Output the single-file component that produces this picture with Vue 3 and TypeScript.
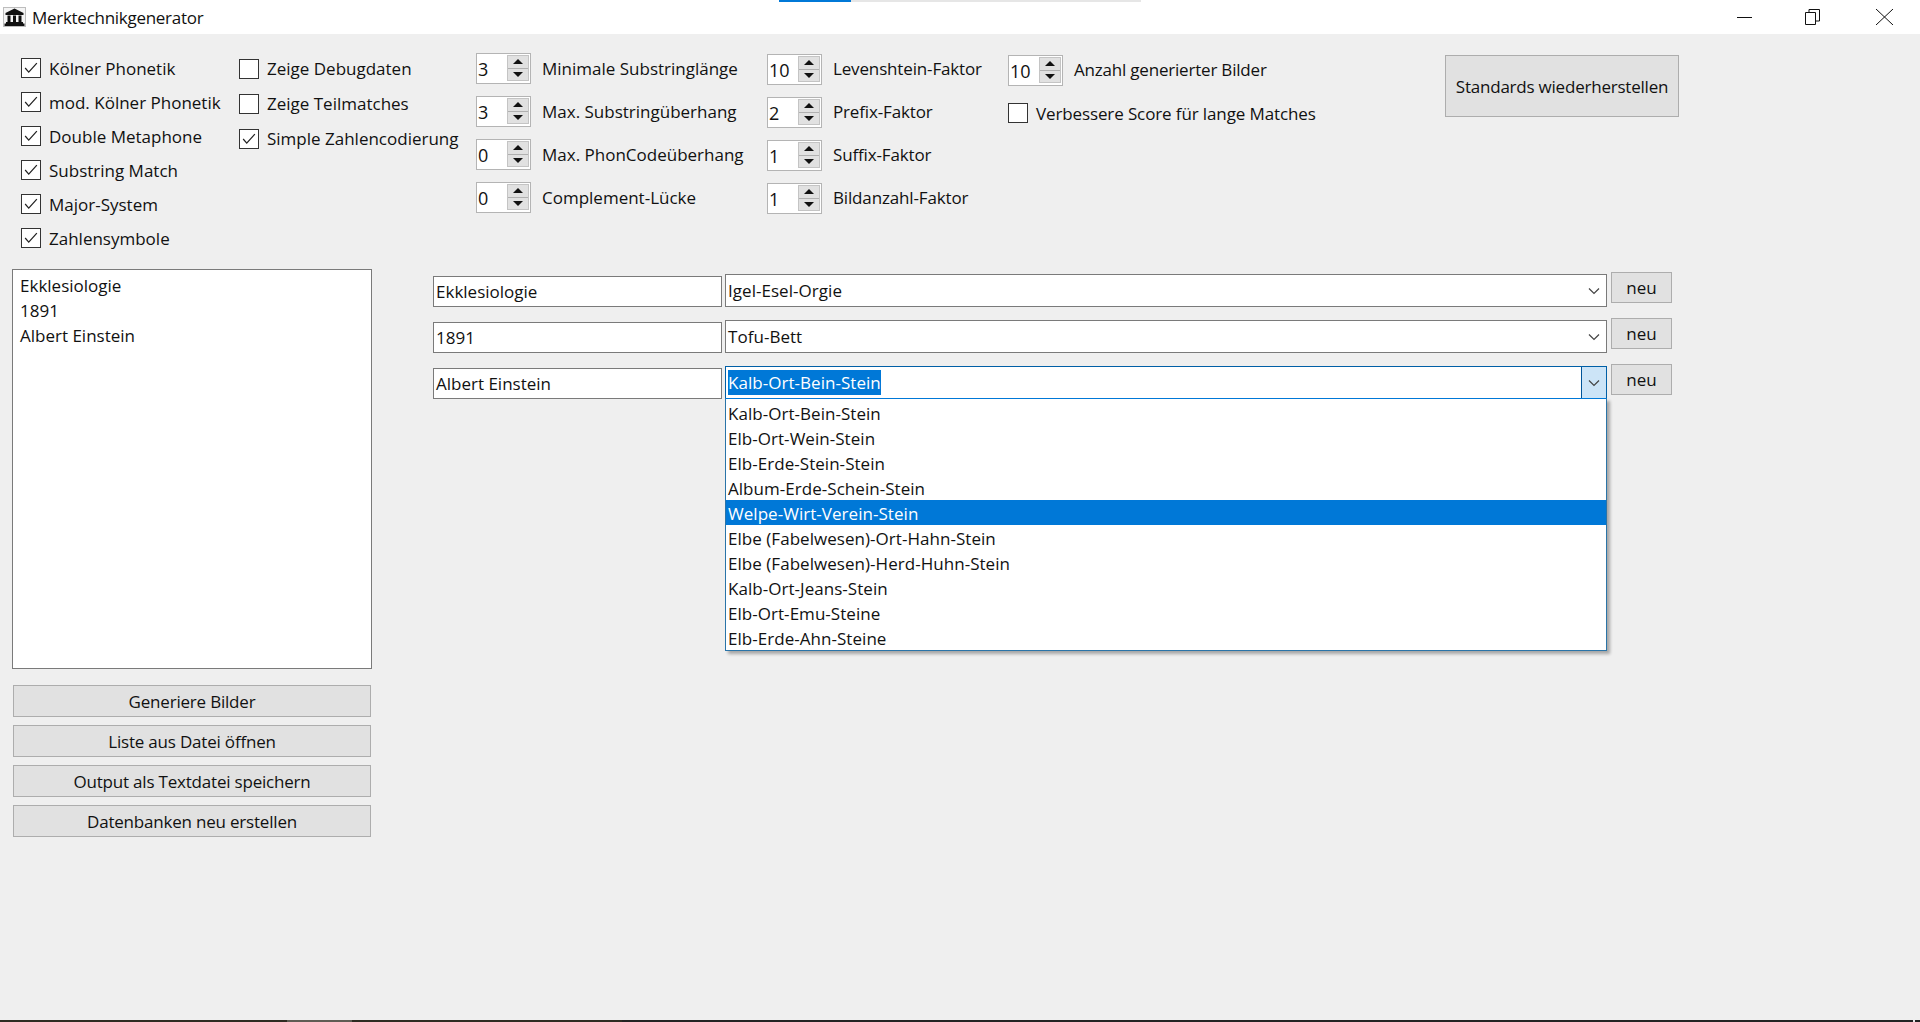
<script setup lang="ts">
const col1 = ['Kölner Phonetik', 'mod. Kölner Phonetik', 'Double Metaphone', 'Substring Match', 'Major-System', 'Zahlensymbole']
const col2 = [
  { label: 'Zeige Debugdaten', on: false },
  { label: 'Zeige Teilmatches', on: false },
  { label: 'Simple Zahlencodierung', on: true },
]
const spin1 = [
  { v: '3', l: 'Minimale Substringlänge' },
  { v: '3', l: 'Max. Substringüberhang' },
  { v: '0', l: 'Max. PhonCodeüberhang' },
  { v: '0', l: 'Complement-Lücke' },
]
const spin2 = [
  { v: '10', l: 'Levenshtein-Faktor' },
  { v: '2', l: 'Prefix-Faktor' },
  { v: '1', l: 'Suffix-Faktor' },
  { v: '1', l: 'Bildanzahl-Faktor' },
]
const words = ['Ekklesiologie', '1891', 'Albert Einstein']
const actions = ['Generiere Bilder', 'Liste aus Datei öffnen', 'Output als Textdatei speichern', 'Datenbanken neu erstellen']
const rows = [
  { word: 'Ekklesiologie', pick: 'Igel-Esel-Orgie', open: false },
  { word: '1891', pick: 'Tofu-Bett', open: false },
  { word: 'Albert Einstein', pick: 'Kalb-Ort-Bein-Stein', open: true },
]
const options = [
  'Kalb-Ort-Bein-Stein', 'Elb-Ort-Wein-Stein', 'Elb-Erde-Stein-Stein', 'Album-Erde-Schein-Stein',
  'Welpe-Wirt-Verein-Stein', 'Elbe (Fabelwesen)-Ort-Hahn-Stein', 'Elbe (Fabelwesen)-Herd-Huhn-Stein',
  'Kalb-Ort-Jeans-Stein', 'Elb-Ort-Emu-Steine', 'Elb-Erde-Ahn-Steine',
]
</script>

<template>
  <div class="window">
    <div class="progress"><span class="progress-fill"></span></div>
    <header class="titlebar">
      <svg class="app-icon" viewBox="0 0 23 20" width="23" height="20">
        <rect x="0" y="0" width="23" height="20" fill="#bdbdbd" />
        <rect x="1" y="1" width="21" height="18" fill="#f4f4f4" />
        <path d="M11.500 1.500 20.500 6V8H2.500V6Z" fill="#111" />
        <path d="M4.500 8.500h3V15h-3zM10 8.500h3V15h-3zM15.500 8.500h3V15h-3z" fill="#111" />
        <path d="M3 15h17v1.500H3zM1.500 16.500h20V19h-20z" fill="#111" />
      </svg>
      <span class="title">Merktechnikgenerator</span>
      <div class="win-controls">
        <svg class="wc min" viewBox="0 0 15 16" width="15" height="16"><path d="M0 8.500h15" stroke="#111" fill="none" /></svg>
        <svg class="wc restore-icon" viewBox="0 0 15 16" width="15" height="16"><path d="M.5 3.500h10v12H.5zM4 3.500V.5h10.500v11.500H10.500" stroke="#111" fill="none" /></svg>
        <svg class="wc close" viewBox="0 0 17 16" width="17" height="16"><path d="M0 0l17 16M17 0 0 16" stroke="#111" fill="none" /></svg>
      </div>
    </header>

    <main class="content">
      <section class="options">
        <div class="check-col col-a">
          <label v-for="c in col1" :key="c" class="check">
            <span class="box">
              <svg viewBox="0 0 20 20" width="18" height="18"><path d="M3.500 10l4 4.500 9-10" stroke="#222" stroke-width="1.400" fill="none" /></svg>
            </span>
            {{ c }}
          </label>
        </div>
        <div class="check-col col-b">
          <label v-for="c in col2" :key="c.label" class="check">
            <span class="box">
              <svg v-if="c.on" viewBox="0 0 20 20" width="18" height="18"><path d="M3.500 10l4 4.500 9-10" stroke="#222" stroke-width="1.400" fill="none" /></svg>
            </span>
            {{ c.label }}
          </label>
        </div>
        <div class="spin-col col-c">
          <div v-for="s in spin1" :key="s.l" class="spin-row">
            <div class="spin">
              <span class="spin-val">{{ s.v }}</span>
              <span class="spin-btns"><i class="up"></i><i class="down"></i></span>
            </div>
            <span class="spin-label">{{ s.l }}</span>
          </div>
        </div>
        <div class="spin-col col-d">
          <div v-for="s in spin2" :key="s.l" class="spin-row">
            <div class="spin">
              <span class="spin-val">{{ s.v }}</span>
              <span class="spin-btns"><i class="up"></i><i class="down"></i></span>
            </div>
            <span class="spin-label">{{ s.l }}</span>
          </div>
        </div>
        <div class="col-e">
          <div class="spin-row">
            <div class="spin">
              <span class="spin-val">10</span>
              <span class="spin-btns"><i class="up"></i><i class="down"></i></span>
            </div>
            <span class="spin-label">Anzahl generierter Bilder</span>
          </div>
          <label class="check wide">
            <span class="box"></span>
            Verbessere Score für lange Matches
          </label>
        </div>
        <button class="btn restore">Standards wiederherstellen</button>
      </section>

      <section class="lower">
        <aside class="left">
          <div class="listbox">
            <div v-for="w in words" :key="w" class="list-line">{{ w }}</div>
          </div>
          <div class="actions">
            <button v-for="a in actions" :key="a" class="btn action">{{ a }}</button>
          </div>
        </aside>

        <div class="mappings">
          <div v-for="r in rows" :key="r.word" class="map-row">
            <div class="word">{{ r.word }}</div>
            <div class="combo" :class="{ open: r.open }">
              <span class="combo-text" :class="{ sel: r.open }">{{ r.pick }}</span>
              <span class="combo-arrow">
                <svg viewBox="0 0 12 8" width="12" height="8"><path d="M1 1.500l5 5 5-5" stroke="#444" stroke-width="1.200" fill="none" /></svg>
              </span>
              <ul v-if="r.open" class="dropdown">
                <li v-for="(o, i) in options" :key="o" :class="{ hot: i === 4 }">{{ o }}</li>
              </ul>
            </div>
            <button class="btn neu">neu</button>
          </div>
        </div>
      </section>
    </main>
    <div class="taskbar-edge">
      <span class="edge-warm"></span>
      <span class="edge-active"></span>
      <span class="edge-warm short"></span>
      <span class="edge-dark"></span>
      <span class="edge-tick"></span>
      <span class="edge-end"></span>
    </div>
  </div>
</template>

<style>
html, body { margin: 0; background: #efefef; }
</style>

<style scoped>
.window {
  position: relative;
  width: 1920px;
  height: 1022px;
  display: flex;
  flex-direction: column;
  overflow: hidden;
  background: #efefef;
  color: #111;
  font-family: "Open Sans", "Noto Sans", sans-serif;
  font-size: 17px;
}
.progress {
  position: absolute;
  left: 779px;
  top: 0;
  width: 362px;
  height: 2px;
  background: #e6e6e6;
}
.progress-fill { display: block; width: 72px; height: 2px; background: #0078d7; }
.titlebar {
  height: 34px;
  flex: none;
  background: #fff;
  display: flex;
  align-items: center;
  padding-left: 3px;
  box-sizing: border-box;
}
.app-icon { flex: none; margin-top: -1px; }
.title { margin-left: 6px; font-size: 17px; line-height: 34px; letter-spacing: -0.28px; margin-top: 1px; }
.win-controls { margin-left: auto; display: flex; padding-right: 27px; align-items: center; }
.wc { display: block; }
.restore-icon { margin-left: 53px; margin-top: -1px; }
.close { margin-left: 56px; margin-top: -1px; }
.content { flex: 1; min-height: 0; display: flex; flex-direction: column; }
.options { display: flex; align-items: flex-start; padding-top: 17px; height: 218px; box-sizing: border-box; }
.check-col { display: flex; flex-direction: column; }
.col-a { margin-left: 21px; width: 218px; }
.col-b { width: 237px; }
.check { display: flex; align-items: center; gap: 8px; height: 34px; white-space: nowrap; }
.col-b .check { height: 35px; }
.box {
  width: 20px;
  height: 20px;
  box-sizing: border-box;
  border: 1px solid #333;
  background: #fff;
  display: flex;
  align-items: center;
  justify-content: center;
  flex: none;
}
.spin-col { display: flex; flex-direction: column; gap: 13px; padding-top: 2px; }
.col-c { width: 291px; }
.col-d { width: 241px; padding-top: 3px; letter-spacing: -0.15px; }
.col-d .spin-label { margin-top: -2px; }
.spin-row { display: flex; align-items: center; gap: 11px; height: 30px; white-space: nowrap; }
.spin {
  width: 55px;
  height: 31px;
  box-sizing: border-box;
  border: 1px solid #b4b4b4;
  background: #fff;
  display: flex;
  align-items: center;
  padding: 0 1px;
  flex: none;
  letter-spacing: 0;
}
.spin-val { flex: 1; padding-left: 0; font-size: 18px; line-height: 29px; margin-top: 2px; }
.spin-btns { width: 22px; height: 26px; display: flex; flex-direction: column; flex: none; background: #e1e1e1; border: 1px solid #c4c4c4; box-sizing: border-box; }
.spin-btns i { flex: 1; display: flex; align-items: center; justify-content: center; }
.spin-btns .up { border-bottom: 1px solid #b0b0b0; }
.spin-btns i::before { content: ""; width: 0; height: 0; border-left: 5px solid transparent; border-right: 5px solid transparent; }
.spin-btns .up::before { border-bottom: 5px solid #111; }
.spin-btns .down::before { border-top: 5px solid #111; }
.col-e { padding-top: 4px; display: flex; flex-direction: column; gap: 11px; }
.col-e .spin-label { letter-spacing: -0.2px; margin-top: -2px; }
.check.wide { height: 34px; letter-spacing: -0.12px; }
.restore { width: 234px; height: 62px; margin-left: auto; margin-right: 241px; margin-top: 4px; }
.btn {
  display: block;
  box-sizing: border-box;
  background: #e1e1e1;
  border: 1px solid #adadad;
  color: #111;
  font: inherit;
  padding: 0;
}
.restore.btn { letter-spacing: -0.22px; }
.lower { display: flex; align-items: flex-start; padding-top: 17px; }
.left { margin-left: 12px; width: 360px; flex: none; }
.listbox {
  height: 400px;
  box-sizing: border-box;
  border: 1px solid #7a7a7a;
  background: #fff;
  padding: 3px 7px;
}
.list-line { height: 25px; line-height: 25px; }
.actions { margin-top: 16px; margin-left: 1px; display: flex; flex-direction: column; gap: 8px; }
.action.btn { width: 358px; height: 32px; letter-spacing: -0.2px; }
.mappings { margin-left: 61px; display: flex; flex-direction: column; gap: 13px; padding-top: 5px; }
.map-row { display: flex; align-items: flex-end; height: 33px; position: relative; }
.word {
  width: 289px;
  height: 31px;
  line-height: 30px;
  box-sizing: border-box;
  border: 1px solid #7a7a7a;
  background: #fff;
  padding: 0 2px;
  flex: none;
}
.combo {
  position: relative;
  margin-left: 3px;
  width: 882px;
  height: 33px;
  box-sizing: border-box;
  border: 1px solid #7a7a7a;
  background: #fff;
  display: flex;
  align-items: center;
  padding-left: 2px;
  flex: none;
  letter-spacing: 0.04px;
}
.combo-text { line-height: 25px; margin-top: -1px; }
.combo-text.sel { background: #0078d7; color: #fff; }
.combo-arrow { margin-left: auto; width: 25px; height: 31px; display: flex; align-items: center; justify-content: center; box-sizing: border-box; }
.combo.open { border-color: #005fa6; }
.combo.open .combo-arrow { background: #cce4f7; border-left: 1px solid #005499; }
.dropdown {
  position: absolute;
  z-index: 2;
  left: -1px;
  top: 31px;
  width: 882px;
  box-sizing: border-box;
  margin: 0;
  padding: 1px 0 0;
  list-style: none;
  background: #fff;
  border: 1px solid #2a74a8;
  border-top-color: #0078d7;
  box-shadow: 3px 3px 3px rgba(0, 0, 0, 0.3);
}
.dropdown li { height: 25px; line-height: 27px; padding-left: 2px; white-space: nowrap; }
.dropdown li.hot { background: #0078d7; color: #fff; }
.neu { width: 61px; height: 31px; margin-left: 4px; align-self: flex-start; margin-top: -2px; }
.taskbar-edge { height: 2px; flex: none; display: flex; background: #232323; }
.edge-warm { width: 287px; background: #2e2b22; }
.edge-warm.short { width: 270px; }
.edge-active { width: 65px; background: #5f5c54; }
.edge-dark { flex: 1; }
.edge-tick { width: 2px; background: #e8e8e8; }
.edge-end { width: 5px; }
</style>
